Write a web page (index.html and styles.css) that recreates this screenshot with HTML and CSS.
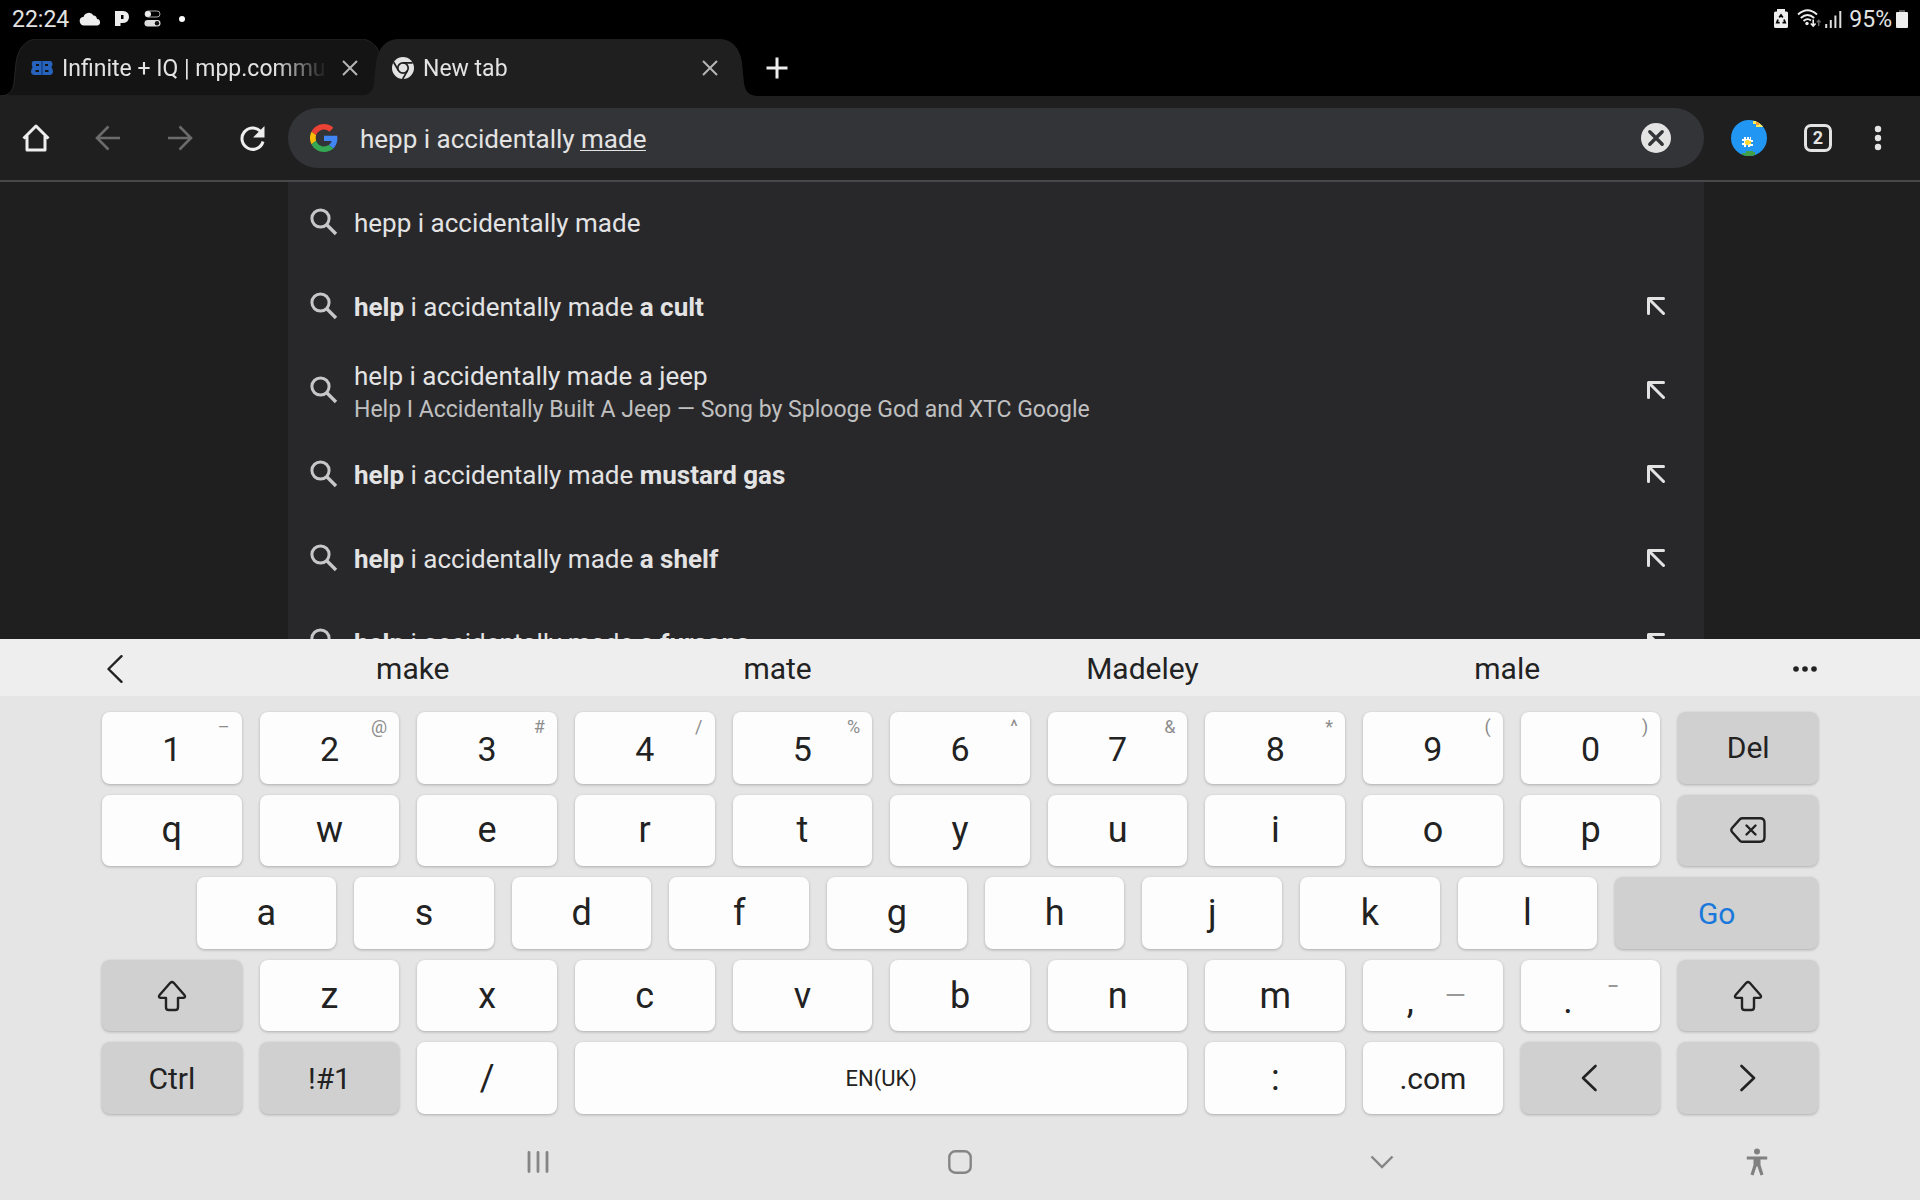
FILE: index.html
```html
<!DOCTYPE html>
<html lang="en">
<head>
  <meta charset="UTF-8">
  <title>New tab</title>
  <link rel="stylesheet" href="styles.css">
</head>
<body>
  <!-- shared icons -->
  <svg class="sprite" aria-hidden="true">
    <symbol id="search" viewBox="0 0 28 28">
      <circle cx="10.5" cy="10.5" r="8.6" fill="none" stroke="currentColor" stroke-width="3"/>
      <path d="M16.5 16.5L26 26" stroke="currentColor" stroke-width="3.4"/>
    </symbol>
    <symbol id="fill" viewBox="0 0 18 18">
      <path d="M16.5 1.5H1.5V16.5M2 2L16.5 16.5" fill="none" stroke="currentColor" stroke-width="3" stroke-linecap="round" stroke-linejoin="round"/>
    </symbol>
    <symbol id="close" viewBox="0 0 16 16">
      <path d="M1 1L15 15M15 1L1 15" stroke="currentColor" stroke-width="2"/>
    </symbol>
    <symbol id="shift" viewBox="0 0 30 32">
      <path d="M13.3 2.8Q15 1.2 16.7 2.8L27.6 15.2Q28.8 17.5 26.4 17.9H21V27.3Q21 30 18.3 30H11.7Q9 30 9 27.3V17.9H3.6Q1.2 17.5 2.4 15.2Z" fill="none" stroke="currentColor" stroke-width="2.4" stroke-linejoin="round"/>
    </symbol>
    <symbol id="tab-shape" viewBox="0 0 398 57">
      <path d="M0 57C9 57 13 52 14 44L16 24C18 9 26 0 38 0H360C372 0 380 9 382 24L384 44C385 52 389 57 398 57Z"/>
    </symbol>
  </svg>

  <div class="screen">
    <header class="status">
      <span class="clock">22:24</span>
      <svg class="cloud" width="22" height="14" viewBox="0 0 22 14"><path d="M5 13.500A4.400 4.400 0 0 1 3.500 5Q4 5 4.500 5.100A5.500 5.500 0 0 1 14.500 3.400A4 4 0 0 1 18 7A3.300 3.300 0 0 1 18.500 13.500Z" fill="#eee"/></svg>
      <svg class="parking" width="14" height="15" viewBox="0 0 14 15"><path fill-rule="evenodd" d="M0 0H8Q14 .5 14 6Q14 11.500 8 12H5.500V15H0ZM6 4V8H8.500V4Z" fill="#eee"/></svg>
      <svg class="toggles" width="17" height="17" viewBox="0 0 17 17"><rect x="1" y="1" width="15" height="6" rx="3" fill="none" stroke="#aaa"/><circle cx="4" cy="4" r="3" fill="#eee"/><rect x="0.500" y="10" width="16" height="6.500" rx="3.200" fill="#ddd"/><circle cx="13" cy="13.200" r="2.200" fill="#111"/></svg>
      <span class="dot"></span>
      <svg class="saver" width="14" height="19" viewBox="0 0 14 19"><path d="M3 0H11V2.500H12.500Q14 2.500 14 4V17.500Q14 19 12.500 19H1.500Q0 19 0 17.500V4Q0 2.500 1.500 2.500H3Z" fill="#eee"/><path d="M5.200 8.500L7 6L8.800 8.500M10 10.500L11.200 13.700H8.500M5.700 13.700H2.800L4 10.500" fill="none" stroke="#000" stroke-width="1.700"/></svg>
      <svg class="wifi" width="24" height="19" viewBox="0 0 24 19"><g fill="none" stroke="#eee" stroke-width="1.900"><path d="M1 5.500Q10.500-3 20 5.500"/><path d="M3.800 9Q10.500 3 17.200 9"/><path d="M6.500 12Q10.500 8.500 14 11.500"/><path d="M16.200 10.500V17M13.800 14.500L16.200 17L18.600 14.500" stroke-width="1.600"/></g><circle cx="10" cy="14.500" r="1.700" fill="#eee"/><path d="M21.700 17V11.500M19.800 13.300L21.700 11.300L23.600 13.300" fill="none" stroke="#666" stroke-width="1.500"/></svg>
      <svg class="signal" width="17" height="18" viewBox="0 0 17 18"><path d="M1.200 14V18M5.800 10V18M10.400 5.500V18M15.300 1V18" stroke="#ddd" stroke-width="2"/></svg>
      <span class="percent">95%</span>
      <svg class="battery" width="12" height="18" viewBox="0 0 12 18"><path d="M3 0H9V2H3Z" fill="#555"/><rect y="2" width="12" height="16" rx="1" fill="#eee"/></svg>
    </header>

    <nav class="tabs">
      <div class="tab">
        <svg class="tab-bg"><use href="#tab-shape"/></svg>
        <svg class="favicon" viewBox="0 0 22 16"><path fill-rule="evenodd" d="M3 1H19Q21.500 1 21.500 4.500L20.500 7.500Q22 9 22 12Q21.500 15 18.500 15H3.500Q.5 15 0 12Q0 9 1.500 7.500L.8 4.500Q.5 1 3 1ZM5 4V6H8V4ZM14 4V6H17V4ZM4.500 10V12H8V10ZM14 10V12H17.500V10Z" fill="#2763bd"/><path d="M11 1V15" stroke="#153b75" stroke-width="1.200"/></svg>
        <a class="tab-title" href="#">Infinite + IQ | mpp.community</a>
        <button class="tab-close" aria-label="Close tab"><svg width="16" height="16"><use href="#close"/></svg></button>
      </div>
      <div class="tab active">
        <svg class="tab-bg"><use href="#tab-shape"/></svg>
        <svg class="favicon" viewBox="0 0 22 22"><circle cx="11" cy="11" r="11" fill="#e3e3e3"/><circle cx="11" cy="11" r="5.200" fill="none" stroke="#1f1f1f" stroke-width="1.700"/><path d="M11 5.800H20.700M6.500 13.600L1.700 5.300M15.500 13.600L10.700 22" stroke="#1f1f1f" stroke-width="1.700"/></svg>
        <a class="tab-title" href="#">New tab</a>
        <button class="tab-close" aria-label="Close tab"><svg width="16" height="16"><use href="#close"/></svg></button>
      </div>
      <button class="new-tab" aria-label="New tab"><svg width="22" height="22" viewBox="0 0 22 22"><path d="M11 .5V21.500M.5 11H21.500" stroke="#eee" stroke-width="3"/></svg></button>
    </nav>

    <div class="toolbar">
      <button class="tool" aria-label="Home"><svg width="28" height="28" viewBox="0 0 28 28"><path d="M1.500 14.500L14 2L26.500 14.500M5 12V26H23V12" fill="none" stroke="#eee" stroke-width="3" stroke-linejoin="round"/></svg></button>
      <button class="tool" aria-label="Back" disabled><svg width="26" height="26" viewBox="0 0 26 26"><path d="M25 13H3M13.500 1.500L2 13L13.500 24.500" fill="none" stroke="#6b6b6b" stroke-width="2.600"/></svg></button>
      <button class="tool" aria-label="Forward" disabled><svg width="26" height="26" viewBox="0 0 26 26"><path d="M1 13H23M12.500 1.500L24 13L12.500 24.500" fill="none" stroke="#6b6b6b" stroke-width="2.600"/></svg></button>
      <button class="tool" aria-label="Reload"><svg width="25" height="25" viewBox="0 0 25 25"><path d="M23 15.500A10.700 10.700 0 1 1 20.500 5.300" fill="none" stroke="#eee" stroke-width="3"/><path d="M24.500 0V11.500H13Z" fill="#eee"/></svg></button>

      <form class="omnibox">
        <svg class="google" viewBox="0 0 48 48" width="28" height="28">
          <path fill="#EA4335" d="M24 9.500c3.540 0 6.710 1.220 9.210 3.600l6.850-6.850C35.900 2.380 30.470 0 24 0 14.620 0 6.510 5.380 2.560 13.220l7.980 6.190C12.430 13.720 17.740 9.500 24 9.500z"/>
          <path fill="#4285F4" d="M46.980 24.550c0-1.570-.15-3.090-.38-4.550H24v9.020h12.940c-.58 2.960-2.260 5.480-4.780 7.180l7.730 6c4.510-4.180 7.090-10.360 7.090-17.650z"/>
          <path fill="#FBBC05" d="M10.530 28.590c-.48-1.450-.76-2.990-.76-4.590s.27-3.140.76-4.590l-7.980-6.190C.92 16.460 0 20.120 0 24c0 3.880.92 7.540 2.560 10.780l7.970-6.190z"/>
          <path fill="#34A853" d="M24 48c6.480 0 11.930-2.130 15.890-5.810l-7.730-6c-2.150 1.450-4.920 2.300-8.160 2.300-6.260 0-11.570-4.220-13.470-9.910l-7.980 6.190C6.510 42.620 14.620 48 24 48z"/>
        </svg>
        <div class="query">
          <input type="text" value="hepp i accidentally made" aria-label="Search or type web address" spellcheck="false">
          <span class="composing"></span>
        </div>
        <button type="button" class="clear" aria-label="Clear"><svg width="30" height="30" viewBox="0 0 30 30"><circle cx="15" cy="15" r="15" fill="#e3e3e3"/><path d="M8.800 8.800L21.200 21.200M21.200 8.800L8.800 21.200" stroke="#333438" stroke-width="3.400" stroke-linecap="round"/></svg></button>
      </form>

      <button class="account" aria-label="Account">
        <svg width="36" height="36" viewBox="0 0 36 36">
          <clipPath id="round"><circle cx="18" cy="18" r="18"/></clipPath>
          <g clip-path="url(#round)">
            <path d="M0 0H36V36H0Z" fill="#2196f3"/>
            <path d="M22 1H32V7H25V4H22Z" fill="#ffee58"/><path d="M25 2H28V5H25Z" fill="#ff9838"/>
            <path d="M15 31H22V32H24V36H11V33H15Z" fill="#43a047"/>
            <path d="M13 17H15V19H16V17H18V19H19V17H20V20H22V22H20V24H22V26H19V27H17V25H15V27H13V25H11V23H13V21H11V19H13Z" fill="#fff"/>
            <path d="M15 20H18V21H20V24H18V25H15V24H14V21H15Z" fill="#fdd835"/>
          </g>
        </svg>
      </button>
      <button class="switcher"><span>2</span></button>
      <button class="tool" aria-label="Menu"><svg width="8" height="26" viewBox="0 0 8 26"><g fill="#e3e3e3"><circle cx="4" cy="4" r="3.200"/><circle cx="4" cy="13" r="3.200"/><circle cx="4" cy="22" r="3.200"/></g></svg></button>
    </div>

    <main class="content">
      <ul class="suggestions">
        <li>
          <svg class="search"><use href="#search"/></svg>
          <a href="#">hepp i accidentally made</a>
        </li>
        <li>
          <svg class="search"><use href="#search"/></svg>
          <a href="#"><b>help</b> i accidentally made <b>a cult</b></a>
          <button class="refine" aria-label="Refine"><svg width="18" height="18"><use href="#fill"/></svg></button>
        </li>
        <li class="rich">
          <svg class="search"><use href="#search"/></svg>
          <a href="#">help i accidentally made a jeep
            <small>Help I Accidentally Built A Jeep — Song by Splooge God and XTC Google</small>
          </a>
          <button class="refine" aria-label="Refine"><svg width="18" height="18"><use href="#fill"/></svg></button>
        </li>
        <li>
          <svg class="search"><use href="#search"/></svg>
          <a href="#"><b>help</b> i accidentally made <b>mustard gas</b></a>
          <button class="refine" aria-label="Refine"><svg width="18" height="18"><use href="#fill"/></svg></button>
        </li>
        <li>
          <svg class="search"><use href="#search"/></svg>
          <a href="#"><b>help</b> i accidentally made <b>a shelf</b></a>
          <button class="refine" aria-label="Refine"><svg width="18" height="18"><use href="#fill"/></svg></button>
        </li>
        <li>
          <svg class="search"><use href="#search"/></svg>
          <a href="#"><b>help</b> i accidentally made <b>a fursona</b></a>
          <button class="refine" aria-label="Refine"><svg width="18" height="18"><use href="#fill"/></svg></button>
        </li>
      </ul>
    </main>

    <section class="keyboard">
      <div class="words">
        <button aria-label="Collapse"><svg width="16" height="28" viewBox="0 0 16 28"><path d="M14.500 1.200L1.500 14L14.500 26.800" fill="none" stroke="#222" stroke-width="2.400" stroke-linecap="round" stroke-linejoin="round"/></svg></button>
        <button>make</button>
        <button>mate</button>
        <button>Madeley</button>
        <button>male</button>
        <button aria-label="More"><svg width="24" height="6" viewBox="0 0 24 6"><g fill="#222"><circle cx="3" cy="3" r="2.800"/><circle cx="12" cy="3" r="2.800"/><circle cx="21" cy="3" r="2.800"/></g></svg></button>
      </div>

      <div class="keys">
        <button class="key num">1<sup>–</sup></button>
        <button class="key num">2<sup>@</sup></button>
        <button class="key num">3<sup>#</sup></button>
        <button class="key num">4<sup>/</sup></button>
        <button class="key num">5<sup>%</sup></button>
        <button class="key num">6<sup>^</sup></button>
        <button class="key num">7<sup>&amp;</sup></button>
        <button class="key num">8<sup>*</sup></button>
        <button class="key num">9<sup>(</sup></button>
        <button class="key num">0<sup>)</sup></button>
        <button class="key fn">Del</button>

        <button class="key">q</button>
        <button class="key">w</button>
        <button class="key">e</button>
        <button class="key">r</button>
        <button class="key">t</button>
        <button class="key">y</button>
        <button class="key">u</button>
        <button class="key">i</button>
        <button class="key">o</button>
        <button class="key">p</button>
        <button class="key fn" aria-label="Backspace"><svg width="36" height="26" viewBox="0 0 36 26"><path d="M12.500 1.200H30Q34.500 1.200 34.500 5.700V20.300Q34.500 24.800 30 24.800H12.500Q11 24.800 10 23.800L2.300 15.300Q.3 13 2.300 10.700L10 2.200Q11 1.200 12.500 1.200Z" fill="none" stroke="#222" stroke-width="2.400"/><path d="M16.500 8.500L25.500 17.500M25.500 8.500L16.500 17.500" stroke="#222" stroke-width="2.400" stroke-linecap="round"/></svg></button>

        <button class="key indent">a</button>
        <button class="key">s</button>
        <button class="key">d</button>
        <button class="key">f</button>
        <button class="key">g</button>
        <button class="key">h</button>
        <button class="key">j</button>
        <button class="key">k</button>
        <button class="key">l</button>
        <button class="key fn go">Go</button>

        <button class="key fn" aria-label="Shift"><svg width="30" height="32"><use href="#shift"/></svg></button>
        <button class="key">z</button>
        <button class="key">x</button>
        <button class="key">c</button>
        <button class="key">v</button>
        <button class="key">b</button>
        <button class="key">n</button>
        <button class="key">m</button>
        <button class="key pair"><span>,</span><span class="alt">—</span></button>
        <button class="key pair"><span>.</span><span class="alt">¯</span></button>
        <button class="key fn" aria-label="Shift"><svg width="30" height="32"><use href="#shift"/></svg></button>

        <button class="key fn">Ctrl</button>
        <button class="key fn">!#1</button>
        <button class="key">/</button>
        <button class="key space">EN(UK)</button>
        <button class="key">:</button>
        <button class="key text">.com</button>
        <button class="key fn" aria-label="Left"><svg width="20" height="28" viewBox="0 0 20 28"><path d="M14.500 2L2 14L14.500 26" fill="none" stroke="#222" stroke-width="2.600" stroke-linecap="round" stroke-linejoin="round"/></svg></button>
        <button class="key fn" aria-label="Right"><svg width="16" height="28" viewBox="0 0 16 28"><path d="M1.500 2L14 14L1.500 26" fill="none" stroke="#222" stroke-width="2.600" stroke-linecap="round" stroke-linejoin="round"/></svg></button>
      </div>

      <nav class="system">
        <span></span>
        <button aria-label="Recents"><svg width="22" height="22" viewBox="0 0 22 22"><path d="M2 1.500V20.500M11 1.500V20.500M20 1.500V20.500" stroke="#858585" stroke-width="2.800" stroke-linecap="round"/></svg></button>
        <button aria-label="Home"><svg width="24" height="24" viewBox="0 0 24 24"><rect x="1.300" y="1.300" width="21.400" height="21.400" rx="6" fill="none" stroke="#858585" stroke-width="2.400"/></svg></button>
        <button aria-label="Hide keyboard"><svg width="24" height="14" viewBox="0 0 24 14"><path d="M1.500 1.500L12 12L22.500 1.500" fill="none" stroke="#858585" stroke-width="2.400"/></svg></button>
        <button aria-label="Accessibility"><svg width="22" height="28" viewBox="0 0 22 28"><circle cx="11" cy="3.500" r="3" fill="#808080"/><path d="M.8 8.500H21.200V11.500H14.500V17L17.500 26.500L14.500 27.500L11.500 18.500H10.500L7.500 27.500L4.500 26.500L7.500 17V11.500H.8Z" fill="#808080"/></svg></button>
      </nav>
    </section>
  </div>
</body>
</html>
```

FILE: styles.css
```css
* {
  box-sizing: border-box;
  margin: 0;
  padding: 0;
  font-family: Roboto, sans-serif;
}

body {
  background-color: #000;
  color: #e3e3e3;
}

button {
  border: none;
  background: none;
  color: inherit;
  display: flex;
  justify-content: center;
  align-items: center;
}

a {
  color: inherit;
  text-decoration: none;
}

svg {
  flex-shrink: 0;
}

.sprite {
  display: none;
}

.screen {
  height: 100vh;
  display: flex;
  flex-direction: column;
  overflow: hidden;
}

/* Status bar */
.status {
  height: 39px;
  padding: 0 12px 2px;
  display: flex;
  align-items: center;
  flex-shrink: 0;
  font-size: 23px;
}

.clock,
.percent {
  padding-top: 2px;
}

.cloud {
  margin-left: 10px;
}

.parking {
  margin-left: 14px;
}

.toggles {
  margin-left: 15px;
}

.dot {
  width: 6px;
  height: 6px;
  margin-left: 18px;
  border-radius: 50%;
  background-color: #fff;
}

.saver {
  margin-left: auto;
}

.wifi {
  margin-left: 9px;
}

.signal {
  margin-left: 4px;
}

.percent {
  margin: 0 4px 0 7px;
}

/* Tab strip */
.tabs {
  height: 57px;
  display: flex;
  flex-shrink: 0;
}

.tab {
  position: relative;
  width: 360px;
  padding-left: 31px;
  display: flex;
  align-items: center;
}

.tab + .tab {
  padding-left: 32px;
}

.tab-bg {
  position: absolute;
  left: 0;
  top: 0;
  width: 398px;
  height: 57px;
  fill: #141414;
  stroke: #262626;
}

.active .tab-bg {
  fill: #1f1f1f;
  stroke: none;
}

.favicon {
  position: relative;
  width: 22px;
  height: 22px;
  margin-right: 9px;
}

.tab-title {
  position: relative;
  flex: 1;
  margin-right: 12px;
  padding-top: 2px;
  overflow: hidden;
  white-space: nowrap;
  font-size: 23px;
  mask-image: linear-gradient(to right, #000 80%, transparent);
}

.tab-close {
  position: relative;
  width: 20px;
  height: 32px;
  color: #b5b5b5;
}

.new-tab {
  width: 36px;
  margin-left: 39px;
}

/* Toolbar */
.toolbar {
  position: relative;
  height: 84px;
  padding-right: 6px;
  display: flex;
  align-items: center;
  flex-shrink: 0;
  background-color: #1f1f1f;
  box-shadow: 0 2px #48484a;
}

.tool {
  width: 72px;
  height: 72px;
}

.omnibox {
  flex: 1;
  height: 60px;
  padding: 0 22px;
  display: flex;
  align-items: center;
  border-radius: 30px;
  background-color: #333438;
}

.query {
  position: relative;
  flex: 1;
  margin-left: 22px;
}

.query input {
  width: 100%;
  height: 60px;
  padding-top: 2px;
  border: none;
  outline: none;
  background: none;
  color: #e3e3e3;
  font-size: 26px;
}

/* underline of the word that is still being typed */
.composing {
  position: absolute;
  left: 220px;
  bottom: 17px;
  width: 66px;
  height: 1px;
  background-color: #e3e3e3;
}

.clear {
  width: 52px;
}

.account {
  width: 90px;
}

.switcher {
  width: 48px;
}

.switcher span {
  width: 28px;
  height: 28px;
  border: 3px solid #e3e3e3;
  border-radius: 7px;
  font-size: 18px;
  font-weight: bold;
  line-height: 22px;
}

/* Suggestions */
.content {
  flex: 1;
  min-height: 0;
  padding: 0 216px 0 288px;
  overflow: hidden;
  background-color: #1f1f1f;
}

.suggestions {
  list-style: none;
  background-color: #28282b;
}

.suggestions li {
  height: 84px;
  padding: 0 22px;
  display: flex;
  align-items: center;
}

.search {
  width: 28px;
  height: 28px;
  color: #c7c7c7;
}

.suggestions a {
  flex: 1;
  margin-left: 16px;
  padding-top: 2px;
  font-size: 26px;
  line-height: 34px;
}

.suggestions .rich a {
  padding-top: 5px;
}

.suggestions small {
  display: block;
  color: #c0c0c0;
  font-size: 23px;
}

.refine {
  width: 52px;
  height: 52px;
}

/* Keyboard */
.keyboard {
  flex-shrink: 0;
  background-color: #e5e5e5;
  color: #222;
}

.words {
  height: 57px;
  padding-top: 2px;
  display: grid;
  grid-template-columns: 1fr repeat(4, 19%) 1fr;
  background-color: #eee;
}

.words button {
  font-size: 30px;
}

/* 55 narrow columns, so an ordinary key takes 5 of them */
.keys {
  height: 418px;
  padding: 16px 93px 0;
  display: grid;
  grid-template-columns: repeat(55, 1fr);
  grid-template-rows: repeat(5, 1fr);
  row-gap: 11px;
}

.key {
  position: relative;
  grid-column: span 5;
  margin: 0 9px;
  border-radius: 8px;
  background-color: #fdfdfd;
  box-shadow: 0 1px 3px rgba(0, 0, 0, 0.25);
  font-size: 36px;
}

.num {
  padding-top: 3px;
  font-size: 34px;
}

.num sup {
  position: absolute;
  top: 4px;
  right: 12px;
  color: #8c8c8c;
  font-size: 18px;
}

.fn {
  background-color: #d0d0d0;
  font-size: 30px;
}

.text {
  font-size: 30px;
}

.indent {
  grid-column: 4 / span 5;
}

.go {
  grid-column: span 7;
  padding-top: 2px;
  color: #1a78dc;
}

.space {
  grid-column: span 20;
  font-size: 22px;
}

.pair {
  padding-top: 10px;
}

.pair span {
  width: 45px;
}

.pair .alt {
  padding-bottom: 10px;
  color: #999;
  font-size: 27px;
}

/* System navigation */
.system {
  height: 86px;
  padding-top: 10px;
  display: grid;
  grid-template-columns: 1fr repeat(3, 22%) 1fr;
}
```
